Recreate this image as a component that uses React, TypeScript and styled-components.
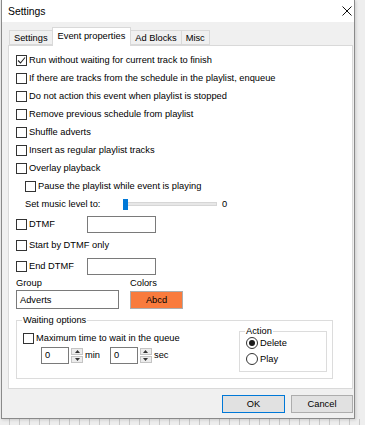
import React, { FC } from "react";
import styled, { createGlobalStyle } from "styled-components";

const GlobalStyle = createGlobalStyle`
  html, body {
    margin: 0;
    padding: 0;
  }
  body {
    width: 365px;
    height: 425px;
    overflow: hidden;
    background: #ececec;
    font-family: "Liberation Sans", Arial, sans-serif;
    font-size: 9.3px;
    color: #000;
  }
`;

const Screen = styled.div`
  width: 365px;
  height: 425px;
  background: repeating-linear-gradient(
      90deg,
      transparent 0 9px,
      #c9c9c9 9px 10px
    )
    bottom / 100% 6px no-repeat,
    #eeeeee;
`;

const Window = styled.div`
  margin-left: 1px;
  width: 354px;
  box-sizing: border-box;
  border: 1px solid #8a8a8a;
  border-top: none;
  background: #f0f0f0;
  display: flex;
  flex-direction: column;
  box-shadow: 1px 1px 3px rgba(0, 0, 0, 0.15);
`;

const TitleBar = styled.div`
  height: 22px;
  background: #fff;
  display: flex;
  align-items: center;
  justify-content: space-between;
  padding: 0 2px 0 6px;
  font-size: 10.4px;
`;

const CloseButton = styled.div`
  width: 10px;
  height: 22px;
  display: flex;
  align-items: center;
  justify-content: center;
`;

const Content = styled.div`
  padding: 5px 1px 0 6px;
`;

const TabStrip = styled.div`
  display: flex;
  align-items: flex-end;
  height: 18px;
  padding-left: 2px;
  position: relative;
  z-index: 1;
`;

const Tab = styled.div<{ $active?: boolean }>`
  box-sizing: border-box;
  height: ${(p) => (p.$active ? 19 : 15)}px;
  margin-bottom: ${(p) => (p.$active ? -1 : 0)}px;
  padding: 0 ${(p) => (p.$active ? 5 : 4)}px;
  border: 1px solid #d9d9d9;
  border-bottom: ${(p) => (p.$active ? "none" : "1px solid #d9d9d9")};
  margin-left: -1px;
  background: ${(p) => (p.$active ? "#fff" : "#f0f0f0")};
  display: flex;
  align-items: center;
  padding-bottom: ${(p) => (p.$active ? 3 : 0)}px;
  white-space: nowrap;
`;

const Panel = styled.div`
  height: 344px;
  box-sizing: border-box;
  border: 1px solid #d9d9d9;
  background: #fff;
  padding: 5px 0 0 7px;
`;

const Row = styled.div<{ $h?: number; $indent?: number }>`
  display: flex;
  align-items: center;
  height: ${(p) => p.$h ?? 18}px;
  padding-left: ${(p) => p.$indent ?? 0}px;
  white-space: nowrap;
`;

const Box = styled.span`
  width: 11px;
  height: 11px;
  box-sizing: border-box;
  border: 1px solid #333;
  background: #fff;
  display: inline-flex;
  align-items: center;
  justify-content: center;
  margin-right: 2px;
  flex: none;
`;

const Radio = styled.span<{ $on?: boolean }>`
  width: 12px;
  height: 12px;
  box-sizing: border-box;
  border: 1px solid #333;
  border-radius: 50%;
  background: #fff;
  display: inline-flex;
  align-items: center;
  justify-content: center;
  margin-right: 2px;
  flex: none;

  &::after {
    content: "";
    width: 6px;
    height: 6px;
    border-radius: 50%;
    background: ${(p) => (p.$on ? "#1a1a1a" : "transparent")};
  }
`;

const Label = styled.span<{ $w?: number }>`
  display: inline-block;
  width: ${(p) => (p.$w ? `${p.$w}px` : "auto")};
`;

const TextInput = styled.div<{ $w: number; $h: number }>`
  width: ${(p) => p.$w}px;
  height: ${(p) => p.$h}px;
  box-sizing: border-box;
  border: 1px solid #7a7a7a;
  background: #fff;
  display: flex;
  align-items: center;
  padding-left: 3px;
  flex: none;
`;

const SliderTrack = styled.div`
  position: relative;
  width: 94px;
  height: 4px;
  box-sizing: border-box;
  border: 1px solid #d6d6d6;
  background: #e7e7e7;
  margin: 0 5px 0 6px;
`;

const SliderThumb = styled.div`
  position: absolute;
  left: -1px;
  top: -4px;
  width: 5px;
  height: 11px;
  background: #0078d7;
`;

const FieldRow = styled.div`
  display: flex;
  align-items: center;
  height: 12px;
`;

const InputsRow = styled.div`
  display: flex;
  align-items: center;
  height: 21px;
`;

const ColorButton = styled.div`
  width: 53px;
  height: 18px;
  box-sizing: border-box;
  border: 1px solid #adadad;
  background: #f97b3d;
  display: flex;
  align-items: center;
  justify-content: center;
  margin-left: 11px;
`;

const GroupBox = styled.div<{ $w: number; $h: number }>`
  position: relative;
  width: ${(p) => p.$w}px;
  height: ${(p) => p.$h}px;
  box-sizing: border-box;
  border: 1px solid #dcdcdc;
`;

const Caption = styled.span`
  position: absolute;
  top: -6px;
  left: 5px;
  padding: 0 1px;
  background: #fff;
  line-height: 11px;
`;

const WaitingInner = styled.div`
  display: flex;
  justify-content: space-between;
  padding: 0 5px 0 6px;
`;

const WaitingLeft = styled.div`
  padding-top: 9px;
`;

const SpinGroup = styled.div`
  display: flex;
  align-items: center;
  margin-right: 10px;
`;

const SpinButtons = styled.div`
  display: flex;
  flex-direction: column;
  gap: 1px;
  margin: 0 2px 0 2px;
`;

const SpinHalf = styled.div`
  width: 12px;
  height: 7px;
  box-sizing: border-box;
  border: 1px solid #c4c4c4;
  background: #ececec;
  display: flex;
  align-items: center;
  justify-content: center;
`;

const ActionBox = styled(GroupBox)`
  margin-top: 10px;
  padding: 3px 0 0 6px;
`;

const Footer = styled.div`
  height: 29px;
  display: flex;
  justify-content: flex-end;
  align-items: flex-start;
  padding-top: 6px;
  box-sizing: border-box;
  gap: 6px;
`;

const Button = styled.div<{ $primary?: boolean }>`
  width: ${(p) => (p.$primary ? 63 : 62)}px;
  height: 18px;
  box-sizing: border-box;
  border: 1px solid ${(p) => (p.$primary ? "#0078d7" : "#adadad")};
  background: #e1e1e1;
  display: flex;
  align-items: center;
  justify-content: center;
`;

const Check: FC<{ checked?: boolean }> = ({ checked }) => (
  <Box>
    {checked && (
      <svg width="9" height="9" viewBox="0 0 9 9">
        <path d="M1 4.5 L3.5 7 L8 1.5" fill="none" stroke="#222" strokeWidth="1.1" />
      </svg>
    )}
  </Box>
);

const Arrow: FC<{ up?: boolean }> = ({ up }) => (
  <svg width="5" height="3" viewBox="0 0 5 3">
    <path d={up ? "M0 3 L2.5 0 L5 3 Z" : "M0 0 L2.5 3 L5 0 Z"} fill="#333" />
  </svg>
);

const Spin: FC<{ unit: string }> = ({ unit }) => (
  <SpinGroup>
    <TextInput $w={28} $h={17}>0</TextInput>
    <SpinButtons>
      <SpinHalf>
        <Arrow up />
      </SpinHalf>
      <SpinHalf>
        <Arrow />
      </SpinHalf>
    </SpinButtons>
    <span>{unit}</span>
  </SpinGroup>
);

const options = [
  { text: "Run without waiting for current track to finish", checked: true },
  { text: "If there are tracks from the schedule in the playlist, enqueue" },
  { text: "Do not action this event when playlist is stopped" },
  { text: "Remove previous schedule from playlist" },
  { text: "Shuffle adverts" },
  { text: "Insert as regular playlist tracks" },
  { text: "Overlay playback" },
];

const tabs = ["Settings", "Event properties", "Ad Blocks", "Misc"];

const App: FC = () => {
  return (
    <Screen>
      <GlobalStyle />
      <Window>
        <TitleBar>
          <span>Settings</span>
          <CloseButton>
            <svg width="10" height="10" viewBox="0 0 10 10">
              <path d="M0.5 0.5 L9.5 9.5 M9.5 0.5 L0.5 9.5" stroke="#111" strokeWidth="1" />
            </svg>
          </CloseButton>
        </TitleBar>

        <Content>
          <TabStrip>
            {tabs.map((t) => (
              <Tab key={t} $active={t === "Event properties"}>
                {t}
              </Tab>
            ))}
          </TabStrip>

          <Panel>
            {options.map((o) => (
              <Row key={o.text}>
                <Check checked={o.checked} />
                {o.text}
              </Row>
            ))}
            <Row $indent={9}>
              <Check />
              Pause the playlist while event is playing
            </Row>
            <Row $indent={9}>
              <Label $w={92}>Set music level to:</Label>
              <SliderTrack>
                <SliderThumb />
              </SliderTrack>
              <span>0</span>
            </Row>

            <Row $h={22}>
              <Check />
              <Label $w={58}>DTMF</Label>
              <TextInput $w={69} $h={17} />
            </Row>
            <Row $h={20}>
              <Check />
              Start by DTMF only
            </Row>
            <Row $h={22}>
              <Check />
              <Label $w={58}>End DTMF</Label>
              <TextInput $w={69} $h={17} />
            </Row>

            <FieldRow>
              <Label $w={114}>Group</Label>
              <span>Colors</span>
            </FieldRow>
            <InputsRow>
              <TextInput $w={103} $h={19}>
                Adverts
              </TextInput>
              <ColorButton>Abcd</ColorButton>
            </InputsRow>

            <GroupBox $w={317} $h={59} style={{ marginTop: 10 }}>
              <Caption>Waiting options</Caption>
              <WaitingInner>
                <WaitingLeft>
                  <Row $h={16}>
                    <Check />
                    Maximum time to wait in the queue
                  </Row>
                  <Row $h={18} $indent={18}>
                    <Spin unit="min" />
                    <Spin unit="sec" />
                  </Row>
                </WaitingLeft>
                <ActionBox $w={88} $h={41}>
                  <Caption>Action</Caption>
                  <Row $h={16}>
                    <Radio $on />
                    Delete
                  </Row>
                  <Row $h={16}>
                    <Radio />
                    Play
                  </Row>
                </ActionBox>
              </WaitingInner>
            </GroupBox>
          </Panel>

          <Footer>
            <Button $primary>OK</Button>
            <Button>Cancel</Button>
          </Footer>
        </Content>
      </Window>
    </Screen>
  );
};

export default App;
